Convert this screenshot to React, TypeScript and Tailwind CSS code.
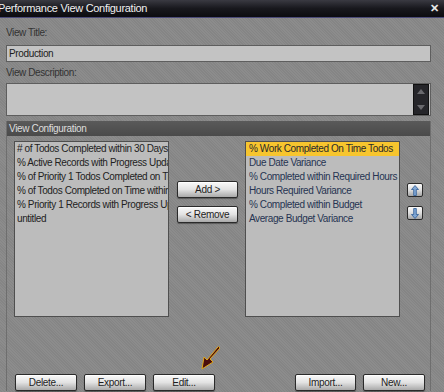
import React from "react";

// ── Data ────────────────────────────────────────────────────────────
const AVAILABLE = [
  "# of Todos Completed within 30 Days",
  "% Active Records with Progress Updates",
  "% of Priority 1 Todos Completed on Time",
  "% of Todos Completed on Time within Budget",
  "% Priority 1 Records with Progress Updates",
  "untitled",
];

const SELECTED = [
  "% Work Completed On Time Todos",
  "Due Date Variance",
  "% Completed within Required Hours",
  "Hours Required Variance",
  "% Completed within Budget",
  "Average Budget Variance",
];

// ── Glossy button ───────────────────────────────────────────────────
const GlossButton: React.FC<{ label: string; className?: string }> = ({ label, className = "" }) => (
  <button
    className={`h-[17px] rounded-[2px] border border-[#2a2a2a] bg-gradient-to-b from-[#fafafa] via-[#e2e2e2] to-[#a9a9a9] text-[10px] tracking-[-0.3px] text-[#1e1e1e] leading-none shadow-[inset_0_1px_0_#ffffff,0_1px_1px_rgba(0,0,0,0.35)] ${className}`}
  >
    {label}
  </button>
);

// ── Up / down arrow button ──────────────────────────────────────────
const ArrowButton: React.FC<{ dir: "up" | "down" }> = ({ dir }) => (
  <button className="w-[16px] h-[14px] rounded-[2px] border border-[#2a2a2a] bg-gradient-to-b from-[#fafafa] via-[#dedede] to-[#a5a5a5] flex items-center justify-center">
    <svg width="8" height="11" viewBox="0 0 8 11" className={dir === "down" ? "rotate-180" : ""}>
      <path d="M4 0.5 L7.5 4.5 L5.3 4.5 L5.3 10.5 L2.7 10.5 L2.7 4.5 L0.5 4.5 Z" fill="#7fa6d4" stroke="#2f5c94" strokeWidth="0.8" />
    </svg>
  </button>
);

// ── List box ────────────────────────────────────────────────────────
const ListBox: React.FC<{ items: string[]; selected?: number; textColor: string; pad: string }> = ({
  items,
  selected,
  textColor,
  pad,
}) => (
  <div className="w-[155px] h-[176px] bg-[#bcbcbc] border border-[#4f4f4f] overflow-hidden">
    {items.map((item, i) => (
      <div
        key={i}
        className={`h-[14px] leading-[14px] whitespace-nowrap overflow-hidden ${pad} text-[10px] tracking-[-0.4px] ${
          i === selected ? "bg-[#f7c52e] text-[#2a2a2a]" : textColor
        }`}
      >
        {item}
      </div>
    ))}
  </div>
);

// ── Main ────────────────────────────────────────────────────────────
export default function App() {
  return (
    <div className="relative w-[444px] h-[392px] overflow-hidden bg-[#898989] bg-[repeating-linear-gradient(45deg,#8c8c8c_0px,#8c8c8c_1px,#858585_1px,#858585_2px)] font-['Liberation_Sans',Arial,sans-serif]">
      {/* Title bar */}
      <div className="h-[18px] flex items-center justify-between bg-gradient-to-b from-[#3a3a42] via-[#18181d] to-[#0c0c10] border-b border-[#4a4a78]">
        <span className="ml-[-2px] text-[11px] tracking-[-0.3px] text-[#f0f0f0] whitespace-nowrap">Performance View Configuration</span>
        <span className="mr-[5px] text-[11px] font-bold leading-none text-[#e8e8e8]">✕</span>
      </div>

      {/* Body */}
      <div className="w-[431px] pl-[6px] flex flex-col">
        <div className="mt-[8px] h-[14px] leading-[14px] text-[10px] tracking-[-0.4px] text-[#333]">View Title:</div>
        <div className="mt-[5px] h-[17px] bg-[#c3c3c3] border border-[#5e5e5e] flex items-center pl-[2px] text-[10px] tracking-[-0.35px] text-[#1c1c1c]">
          Production
        </div>

        <div className="mt-[4px] h-[14px] leading-[14px] text-[10px] tracking-[-0.4px] text-[#333]">View Description:</div>
        <div className="mt-[3px] h-[33px] bg-[#c3c3c3] border border-[#5e5e5e] flex justify-end items-center pr-[1px]">
          <div className="w-[16px] h-[31px] bg-[#26262a] border border-[#111] flex flex-col justify-between items-center py-[4px]">
            <svg width="8" height="5" viewBox="0 0 8 5">
              <path d="M4 0 L8 5 L0 5 Z" fill="#6a6a6e" />
            </svg>
            <svg width="8" height="5" viewBox="0 0 8 5">
              <path d="M0 0 L8 0 L4 5 Z" fill="#6a6a6e" />
            </svg>
          </div>
        </div>

        {/* View Configuration group */}
        <div className="mt-[5px] h-[270px] border-l border-r border-[#6e6e6e] flex flex-col">
          <div className="h-[15px] bg-gradient-to-b from-[#5a5a5a] to-[#4a4a4a] flex items-center pl-[2px] text-[10px] tracking-[-0.35px] text-[#dedede]">
            View Configuration
          </div>

          <div className="mt-[5px] pl-[7px] flex items-start">
            <ListBox items={AVAILABLE} textColor="text-[#222]" pad="pl-[2px]" />

            <div className="ml-[8px] mt-[40px] flex flex-col gap-[8px]">
              <GlossButton label="Add >" className="w-[61px]" />
              <GlossButton label="< Remove" className="w-[61px]" />
            </div>

            <div className="ml-[7px]">
              <ListBox items={SELECTED} selected={0} textColor="text-[#263452]" pad="pl-[3px]" />
            </div>

            <div className="ml-[7px] mt-[42px] flex flex-col gap-[9px]">
              <ArrowButton dir="up" />
              <ArrowButton dir="down" />
            </div>
          </div>

          <div className="mt-auto pl-[8px] pr-[5px] flex">
            <div className="flex gap-[7px]">
              <GlossButton label="Delete..." className="w-[62px]" />
              <GlossButton label="Export..." className="w-[62px]" />
              <GlossButton label="Edit..." className="w-[62px]" />
            </div>
            <div className="ml-auto flex gap-[7px]">
              <GlossButton label="Import..." className="w-[61px]" />
              <GlossButton label="New..." className="w-[62px]" />
            </div>
          </div>
        </div>
      </div>

      {/* Mouse cursor pointing at Edit */}
      <svg className="absolute left-[199px] top-[345px]" width="22" height="26" viewBox="0 0 22 26">
        <path
          d="M19.5 1.5 L21 3 L11 14 L14 17 L3 24 L5 12 L8 15 L18 3 Z"
          fill="#4a0d0d"
          stroke="#e0a516"
          strokeWidth="1"
          strokeLinejoin="round"
        />
      </svg>
    </div>
  );
}
